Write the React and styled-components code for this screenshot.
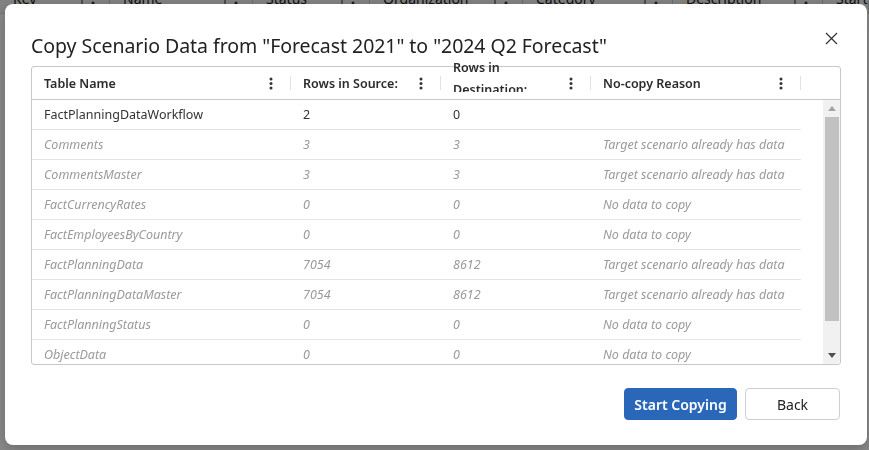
import React from "react";
import styled, { createGlobalStyle } from "styled-components";

const Global = createGlobalStyle`
  html, body { margin: 0; padding: 0; background: #fff; }
  body { font-family: "Noto Sans", "Open Sans", sans-serif; overflow: hidden; }
  * { box-sizing: border-box; }
`;

const Page = styled.div`
  width: 869px;
  height: 450px;
  overflow: hidden;
  background: #fff;
`;

const BgHeader = styled.div`
  display: grid;
  grid-template-columns: 110px 143px 117px 153px 150px 150px 1fr;
  height: 30px;
  margin-top: -16px;
  background: #f3f3f3;
  border-bottom: 1px solid #ddd;
`;

const BgCell = styled.div`
  display: flex;
  align-items: center;
  padding-left: 13px;
  padding-right: 14px;
  font-size: 14px;
  color: #222;
  border-right: 1px solid #ccc;
  white-space: nowrap;
  overflow: hidden;
  gap: 6px;
  span { flex: 1; }
`;

const Overlay = styled.div`
  position: fixed;
  inset: 0;
  background: rgba(0, 0, 0, 0.46);
  padding: 4px 4px 5px 5px;
  display: flex;
`;

const Dialog = styled.div`
  flex: 1;
  background: #fff;
  border-radius: 8px;
  box-shadow: 0 4px 16px rgba(0, 0, 0, 0.25);
  padding: 24px 26px 25px 26px;
  display: flex;
  flex-direction: column;
  position: relative;
`;

const TitleRow = styled.div`
  display: flex;
  align-items: center;
  justify-content: space-between;
  height: 34px;
  margin-bottom: 4px;
`;

const Title = styled.h1`
  margin: 0;
  font-size: 19.5px;
  font-weight: 400;
  color: #222;
  letter-spacing: -0.05px;
`;

const CloseButton = styled.button`
  border: none;
  background: transparent;
  padding: 0;
  width: 14px;
  height: 14px;
  margin-right: 3px;
  margin-top: -13px;
  display: flex;
  align-items: center;
  justify-content: center;
  cursor: pointer;
`;

const TableBox = styled.div`
  border: 1px solid #c8c8c8;
  border-radius: 3px;
  height: 299px;
  display: flex;
  flex-direction: column;
`;

const HeaderRow = styled.div`
  display: grid;
  grid-template-columns: 259px 150px 150px 210px 1fr;
  height: 33px;
  border-bottom: 1px solid #c8c8c8;
  flex: none;
`;

const HeadCell = styled.div`
  position: relative;
  display: flex;
  align-items: center;
  padding-left: 12px;
  padding-right: 18px;
  font-size: 12.5px;
  font-weight: 600;
  color: #2b2b2b;
  &::after {
    content: "";
    position: absolute;
    right: 0;
    top: 9px;
    height: 14px;
    width: 1px;
    background: #e2e2e2;
  }
`;

const HeadLabel = styled.div`
  flex: 1;
  overflow: hidden;
  align-self: ${(p) => (p.$wrap ? "flex-start" : "center")};
  line-height: ${(p) => (p.$wrap ? "22px" : "17px")};
  margin-top: ${(p) => (p.$wrap ? "-10px" : "0")};
  height: ${(p) => (p.$wrap ? "35px" : "auto")};
`;

const BodyArea = styled.div`
  flex: 1;
  display: flex;
  min-height: 0;
  overflow: hidden;
  border-radius: 0 0 3px 3px;
`;

const Rows = styled.div`
  flex: 1;
  overflow: hidden;
`;

const Row = styled.div`
  display: grid;
  grid-template-columns: 259px 150px 150px 210px;
  width: 769px;
  height: 30px;
  border-bottom: 1px solid #e4e4e4;
`;

const Cell = styled.div`
  display: flex;
  align-items: center;
  padding-left: 12px;
  font-size: 12.5px;
  white-space: nowrap;
  overflow: hidden;
  color: ${(p) => (p.$muted ? "#9a9a9a" : "#333")};
  font-style: ${(p) => (p.$muted ? "italic" : "normal")};
`;

const Gutter = styled.div`
  width: 22px;
  flex: none;
`;

const ScrollTrack = styled.div`
  width: 17px;
  flex: none;
  background: #f1f1f1;
  display: flex;
  flex-direction: column;
  align-items: center;
`;

const ScrollArrow = styled.div`
  height: 17px;
  width: 17px;
  display: flex;
  align-items: center;
  justify-content: center;
`;

const ScrollThumb = styled.div`
  width: 14px;
  height: 204px;
  background: #c1c1c1;
`;

const ScrollRest = styled.div`
  flex: 1;
`;

const Footer = styled.div`
  margin-top: auto;
  padding-right: 1px;
  display: flex;
  justify-content: flex-end;
  gap: 8px;
`;

const Button = styled.button`
  height: 32px;
  border-radius: 4px;
  font-family: inherit;
  font-size: 14px;
  cursor: pointer;
  padding: 0;
  width: ${(p) => p.$w}px;
  border: 1px solid ${(p) => (p.$primary ? "#2a67b8" : "#cfcfcf")};
  background: ${(p) => (p.$primary ? "#2a67b8" : "#fff")};
  color: ${(p) => (p.$primary ? "#fff" : "#222")};
  font-weight: ${(p) => (p.$primary ? 600 : 400)};
`;

const Kebab = () => (
  <svg width="4" height="13" viewBox="0 0 4 13">
    <circle cx="2" cy="2" r="1.5" fill="#333" />
    <circle cx="2" cy="6.5" r="1.5" fill="#333" />
    <circle cx="2" cy="11" r="1.5" fill="#333" />
  </svg>
);

const SortIcon = () => (
  <svg width="6" height="10" viewBox="0 0 6 10">
    <path d="M3 0 L3 10" stroke="#333" strokeWidth="1" />
  </svg>
);

const Arrow = ({ down }) => (
  <svg width="8" height="5" viewBox="0 0 8 5">
    <path d={down ? "M0 0 L8 0 L4 5 Z" : "M0 5 L8 5 L4 0 Z"} fill={down ? "#505050" : "#a3a3a3"} />
  </svg>
);

const bgCols = ["Key", "Name", "Status", "Organization", "Category", "Description", "Start Date"];

const rows = [
  ["FactPlanningDataWorkflow", "2", "0", ""],
  ["Comments", "3", "3", "Target scenario already has data"],
  ["CommentsMaster", "3", "3", "Target scenario already has data"],
  ["FactCurrencyRates", "0", "0", "No data to copy"],
  ["FactEmployeesByCountry", "0", "0", "No data to copy"],
  ["FactPlanningData", "7054", "8612", "Target scenario already has data"],
  ["FactPlanningDataMaster", "7054", "8612", "Target scenario already has data"],
  ["FactPlanningStatus", "0", "0", "No data to copy"],
  ["ObjectData", "0", "0", "No data to copy"],
  ["ObjectDataMaster", "0", "0", "No data to copy"],
];

const headers = [
  { label: "Table Name" },
  { label: "Rows in Source:" },
  { label: "Rows in Destination:", wrap: true },
  { label: "No-copy Reason" },
];

export default function App() {
  return (
    <Page>
      <Global />
      <BgHeader>
        {bgCols.map((c, i) => (
          <BgCell key={c}>
            <span>{c}</span>
            {i < 6 && <SortIcon />}
            {i < 6 && <Kebab />}
          </BgCell>
        ))}
      </BgHeader>
      <Overlay>
        <Dialog role="dialog">
          <TitleRow>
            <Title>Copy Scenario Data from "Forecast 2021" to "2024 Q2 Forecast"</Title>
            <CloseButton aria-label="Close">
              <svg width="13" height="13" viewBox="0 0 13 13">
                <path d="M1 1 L12 12 M12 1 L1 12" stroke="#333" strokeWidth="1.2" />
              </svg>
            </CloseButton>
          </TitleRow>
          <TableBox>
            <HeaderRow>
              {headers.map((h) => (
                <HeadCell key={h.label}>
                  <HeadLabel $wrap={h.wrap}>{h.label}</HeadLabel>
                  <Kebab />
                </HeadCell>
              ))}
              <div />
            </HeaderRow>
            <BodyArea>
              <Rows>
                {rows.map((r, i) => (
                  <Row key={r[0]}>
                    {r.map((v, j) => (
                      <Cell key={j} $muted={i > 0}>
                        {v}
                      </Cell>
                    ))}
                  </Row>
                ))}
              </Rows>
              <Gutter />
              <ScrollTrack>
                <ScrollArrow>
                  <Arrow />
                </ScrollArrow>
                <ScrollThumb />
                <ScrollRest />
                <ScrollArrow>
                  <Arrow down />
                </ScrollArrow>
              </ScrollTrack>
            </BodyArea>
          </TableBox>
          <Footer>
            <Button $primary $w={113}>Start Copying</Button>
            <Button $w={95}>Back</Button>
          </Footer>
        </Dialog>
      </Overlay>
    </Page>
  );
}
